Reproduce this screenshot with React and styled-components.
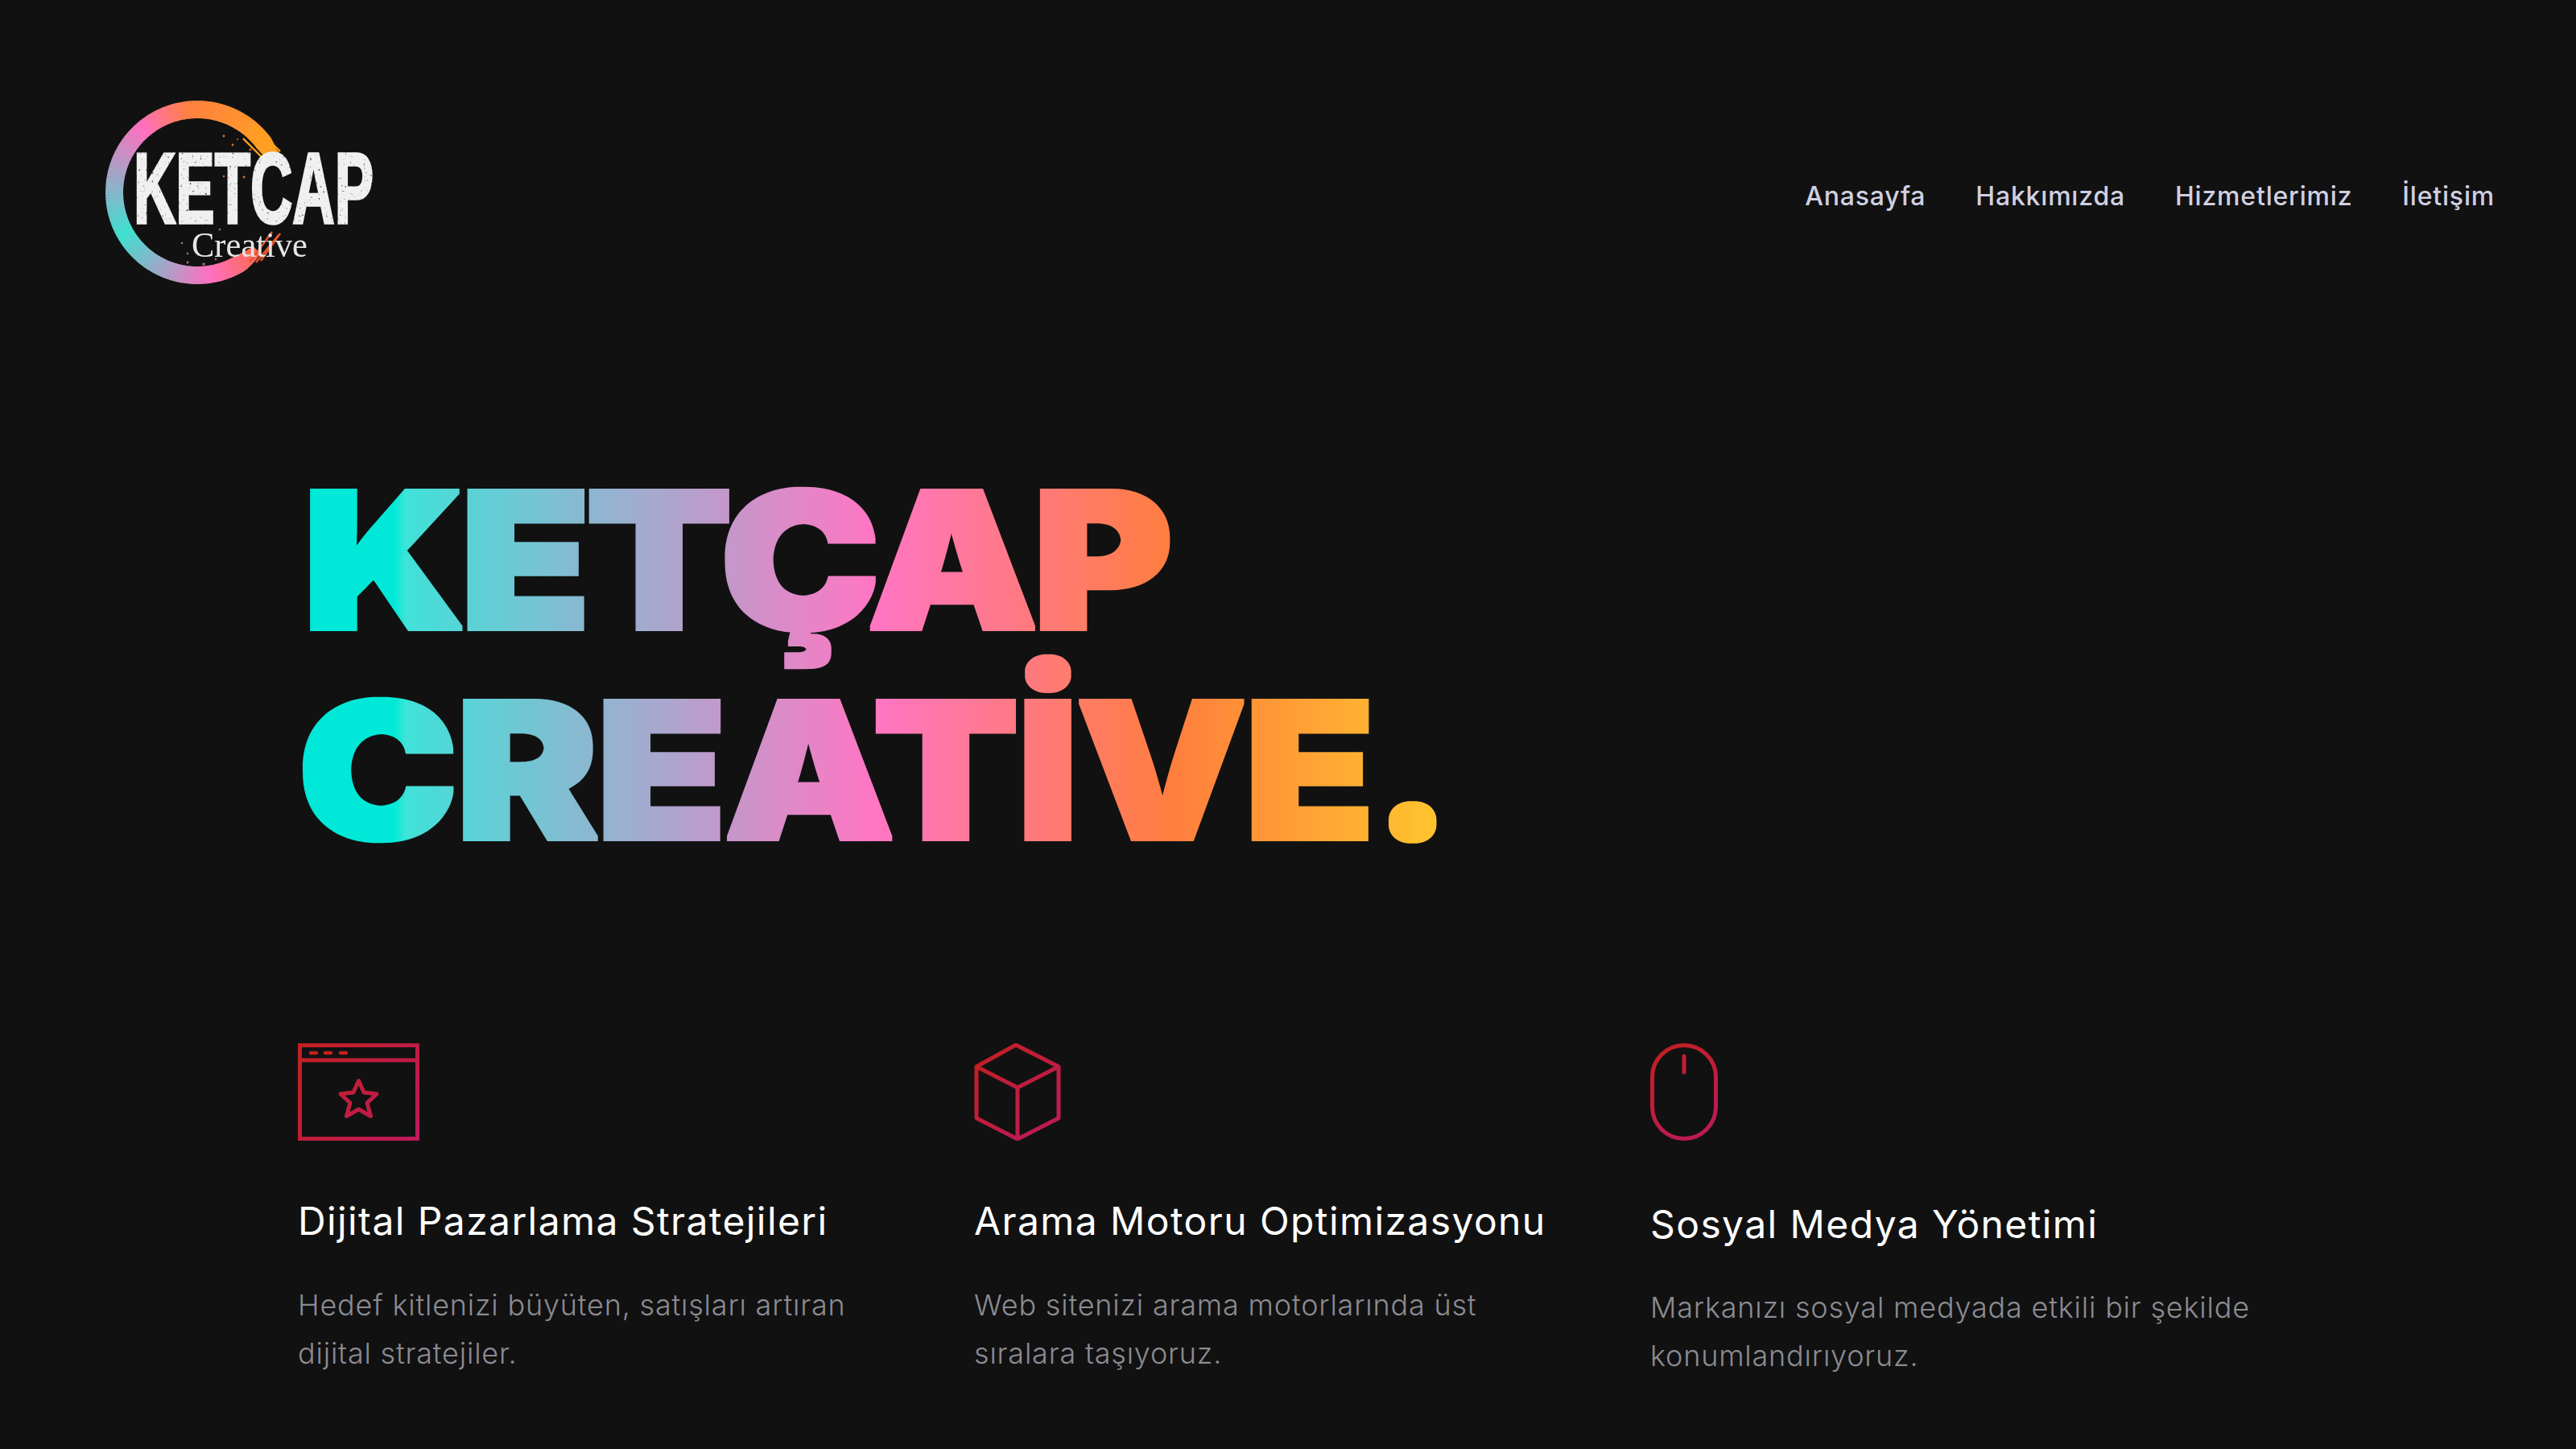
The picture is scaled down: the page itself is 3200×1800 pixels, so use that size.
import React from "react";
import styled, { createGlobalStyle } from "styled-components";

const Global = createGlobalStyle`
  html, body { margin: 0; padding: 0; background: #111111; }
  body { font-family: Inter, "Noto Sans", sans-serif; }
`;

const Page = styled.div`
  width: 3200px;
  height: 1800px;
  overflow: hidden;
  background: #111111;
  display: flex;
  flex-direction: column;
`;
const Header = styled.header`
  display: flex;
  align-items: center;
  justify-content: space-between;
  padding: 120px 101px 0 128px;
  height: 240px;
`;
const LogoSvg = styled.svg`
  width: 340px;
  height: 240px;
  display: block;
`;
const Nav = styled.nav`
  display: flex;
  gap: 62px;
  margin-top: 8px;
`;
const NavLink = styled.a`
  font-size: 32px;
  font-weight: 500;
  line-height: 44px;
  letter-spacing: 0.8px;
  color: #d0d0e2;
`;
const Hero = styled.section`
  padding: 205px 0 0 370px;
`;
const FilterDefs = styled.svg`
  position: absolute;
  width: 0;
  height: 0;
`;
const Title = styled.h1`
  display: inline-block;
  margin: 0;
  font-size: 235px;
  line-height: 261px;
  font-weight: 900;
  color: transparent;
  filter: url(#thicken);
  transform: scaleX(1.133);
  transform-origin: left center;
  background: linear-gradient(90deg, #00e8d8 8.6%, #40e0d8 9.6%, #ff75c3 50%, #ff7d3c 76%, #ffc72c 100%);
  -webkit-background-clip: text;
  background-clip: text;
`;
const TitleLine = styled.span`
  display: block;
  letter-spacing: ${(p) => p.$spacing}px;
  padding-left: ${(p) => p.$indent}px;
`;
const Features = styled.section`
  display: grid;
  grid-template-columns: repeat(3, 840px);
  padding: 209px 0 0 370px;
`;
const Feature = styled.article`
  display: flex;
  flex-direction: column;
`;
const IconSvg = styled.svg`
  height: 121px;
  display: block;
`;
const FeatureTitle = styled.h3`
  margin: ${(p) => (p.$low ? 74 : 70)}px 0 0;
  font-size: 48px;
  line-height: 60px;
  font-weight: 400;
  letter-spacing: 1.4px;
  color: #ffffff;
`;
const FeatureText = styled.p`
  margin: ${(p) => (p.$low ? 43 : 44)}px 0 0;
  width: 752px;
  font-size: 36px;
  line-height: 60px;
  font-weight: 300;
  letter-spacing: 0.8px;
  color: #8b8b93;
`;

const stops = [
  [44, [255, 106, 77]],
  [80, [255, 112, 192]],
  [150, [63, 224, 208]],
  [229, [255, 112, 192]],
  [263, [255, 128, 64]],
  [334, [255, 165, 32]],
];
const colorAt = (a) => {
  for (let i = 0; i < stops.length - 1; i++) {
    const [a0, c0] = stops[i];
    const [a1, c1] = stops[i + 1];
    if (a <= a1) {
      const t = (a - a0) / (a1 - a0);
      return `rgb(${c0.map((v, k) => Math.round(v + (c1[k] - v) * t)).join(",")})`;
    }
  }
  return "rgb(255,165,32)";
};
const pt = (a, r = 103) => {
  const rad = (a * Math.PI) / 180;
  return [117 + r * Math.cos(rad), 119 + r * Math.sin(rad)];
};
const segments = Array.from({ length: 145 }, (_, i) => 44 + i * 2);
// brush-tail width: full over most of the ring, narrowing at both ends
const widthAt = (a) => Math.min(22, 14 + (a - 44) * 0.6, 16 + (334 - a) * 0.5);

const Logo = () => (
  <LogoSvg viewBox="0 0 340 240">
    <defs>
      <filter id="rough" x="-5%" y="-5%" width="110%" height="110%">
        <feTurbulence type="fractalNoise" baseFrequency="0.3" numOctaves="2" seed="4" result="n" />
        <feColorMatrix in="n" type="matrix" values="0 0 0 0 0  0 0 0 0 0  0 0 0 0 0  0 0 0 -4 3.7" result="m" />
        <feComposite in="SourceGraphic" in2="m" operator="in" />
        <feGaussianBlur stdDeviation="0.6" />
      </filter>
      <filter id="soft"><feGaussianBlur stdDeviation="0.5" /></filter>
    </defs>
    <g filter="url(#soft)" fill="none">
      {segments.map((a) => {
        const [x0, y0] = pt(a);
        const [x1, y1] = pt(a + 2.4);
        return <path key={a} d={`M${x0} ${y0}L${x1} ${y1}`} stroke={colorAt(a)} strokeWidth={widthAt(a)} />;
      })}
      <g stroke="#ff9f1c" strokeWidth="2.4">
        <path d="M183 38L218 70" />
        <path d="M178 45L212 73" />
        <path d="M174 52L200 78" />
        <path d="M187 36L220 68" />
      </g>
      <g stroke="#e8552f" strokeWidth="2.4">
        <path d="M182 206L210 168" />
        <path d="M190 206L218 172" />
        <path d="M196 204L220 170" />
      </g>
      <g fill="#e07020" stroke="none">
        <circle cx="150" cy="49" r="1.4" /><circle cx="161" cy="60" r="1.4" /><circle cx="167" cy="53" r="1" />
        <circle cx="183" cy="66" r="1.4" /><circle cx="175" cy="72" r="1.4" /><circle cx="150" cy="99" r="1.2" />
        <circle cx="175" cy="100" r="1.4" /><circle cx="160" cy="88" r="1" />
      </g>
      <g fill="#c06aa8" stroke="none">
        <circle cx="98" cy="182" r="1.2" /><circle cx="105" cy="195" r="1.2" /><circle cx="105" cy="206" r="1.4" />
        <circle cx="125" cy="208" r="1.6" /><circle cx="140" cy="202" r="1.2" /><circle cx="145" cy="165" r="1.2" />
      </g>
    </g>
    <text
      x="38"
      y="157"
      textLength="298"
      lengthAdjust="spacingAndGlyphs"
      fontFamily='"Liberation Sans Narrow", "Liberation Sans", sans-serif'
      fontWeight="700"
      fontSize="124"
      fill="#f0f0f0"
      stroke="#f0f0f0"
      strokeWidth="3.5"
      filter="url(#rough)"
    >
      KETCAP
    </text>
    <text
      x="110"
      y="199"
      textLength="144"
      lengthAdjust="spacingAndGlyphs"
      fontFamily='"Liberation Serif", serif'
      fontSize="44"
      fill="#e6e6e6"
      filter="url(#soft)"
    >
      Creative
    </text>
  </LogoSvg>
);

const IconGradient = ({ id, w }) => (
  <defs>
    <linearGradient id={id} gradientUnits="userSpaceOnUse" x1="0" y1="0" x2={w} y2="121">
      <stop offset="0" stopColor="#c2201f" />
      <stop offset="1" stopColor="#bc1a5e" />
    </linearGradient>
  </defs>
);

const WindowIcon = () => (
  <IconSvg viewBox="0 0 151 121" width="151">
    <IconGradient id="g1" w={151} />
    <g fill="none" stroke="url(#g1)" strokeWidth="5">
      <rect x="2.5" y="2.5" width="146" height="116" />
      <path d="M2.5 21H148.5" />
    </g>
    <path d="M16 12h7M34 12h7M53 12h7" stroke="#c2201f" strokeWidth="4.5" strokeLinecap="round" />
    <path
      d="M75.500 46.500L82 61L98 63L86 74L90.500 90.500L75.500 82L60.500 90.500L65 74L53 63L69 61Z"
      fill="none"
      stroke="url(#g1)"
      strokeWidth="5"
      strokeLinejoin="round"
    />
  </IconSvg>
);

const CubeIcon = () => (
  <IconSvg viewBox="0 0 108 121" width="108">
    <IconGradient id="g2" w={108} />
    <path
      d="M52 2L105 29V93L54 119L3 93V29ZM3 29L54 55L105 29M54 55V119"
      fill="none"
      stroke="url(#g2)"
      strokeWidth="5"
      strokeLinejoin="round"
    />
  </IconSvg>
);

const MouseIcon = () => (
  <IconSvg viewBox="0 0 84 121" width="84">
    <IconGradient id="g3" w={84} />
    <rect x="2.500" y="2.500" width="79" height="116" rx="39.500" fill="none" stroke="url(#g3)" strokeWidth="5" />
    <path d="M42 16V36" stroke="url(#g3)" strokeWidth="5" strokeLinecap="round" />
  </IconSvg>
);

const items = [
  {
    Icon: WindowIcon,
    title: "Dijital Pazarlama Stratejileri",
    text: "Hedef kitlenizi büyüten, satışları artıran dijital stratejiler.",
  },
  {
    Icon: CubeIcon,
    title: "Arama Motoru Optimizasyonu",
    text: "Web sitenizi arama motorlarında üst sıralara taşıyoruz.",
  },
  {
    Icon: MouseIcon,
    title: "Sosyal Medya Yönetimi",
    text: "Markanızı sosyal medyada etkili bir şekilde konumlandırıyoruz.",
    low: true,
  },
];

export default function App() {
  return (
    <Page>
      <Global />
      <FilterDefs aria-hidden="true">
        <filter id="thicken" x="-2%" y="-2%" width="104%" height="104%">
          <feMorphology operator="dilate" radius="2.5" />
        </filter>
      </FilterDefs>
      <Header>
        <Logo />
        <Nav>
          <NavLink>Anasayfa</NavLink>
          <NavLink>Hakkımızda</NavLink>
          <NavLink>Hizmetlerimiz</NavLink>
          <NavLink>İletişim</NavLink>
        </Nav>
      </Header>
      <Hero>
        <Title>
          <TitleLine $spacing={-6} $indent={5}>KETÇAP</TitleLine>
          <TitleLine $spacing={-3} $indent={0}>CREATİVE.</TitleLine>
        </Title>
      </Hero>
      <Features>
        {items.map(({ Icon, title, text, low }) => (
          <Feature key={title}>
            <Icon />
            <FeatureTitle $low={low}>{title}</FeatureTitle>
            <FeatureText $low={low}>{text}</FeatureText>
          </Feature>
        ))}
      </Features>
    </Page>
  );
}
